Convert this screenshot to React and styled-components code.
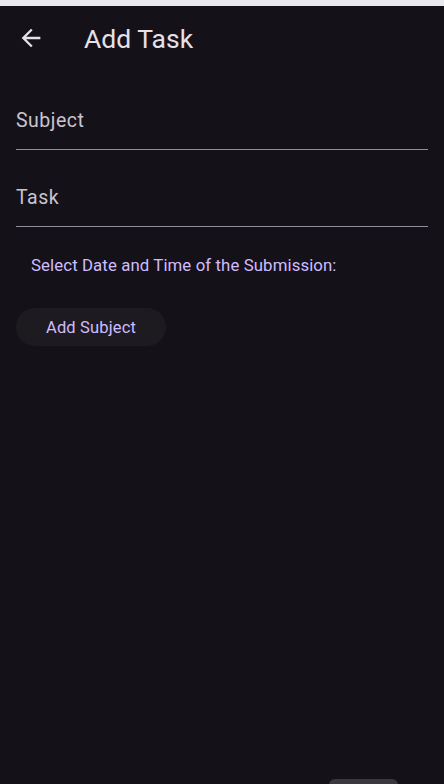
import React from 'react'
import styled, {createGlobalStyle} from 'styled-components'

const colors = {
  surface: '#141218',
  surfaceLow: '#1d1b20',
  onSurface: '#e6e0e9',
  onSurfaceVariant: '#cac4d0',
  outline: '#938f99',
  primary: '#d0bcff',
  strip: '#e8e9ef',
}

const GlobalStyle = createGlobalStyle`
  html, body {
    margin: 0;
    padding: 0;
    height: 100%;
    background: ${colors.surface};
    overflow: hidden;
  }
  #root {
    height: 100%;
  }
`

const Screen = styled.div`
  position: relative;
  height: 784px;
  display: flex;
  flex-direction: column;
  background: ${colors.surface};
  font-family: Roboto, 'Noto Sans', sans-serif;
  overflow: hidden;
`

const StatusStrip = styled.div`
  height: 6px;
  background: ${colors.strip};
`

const AppBar = styled.header`
  height: 64px;
  display: flex;
  align-items: center;
`

const BackButton = styled.button`
  width: 28px;
  height: 28px;
  margin-left: 17px;
  padding: 0;
  border: none;
  background: none;
  color: ${colors.onSurface};
  display: flex;
  cursor: pointer;
`

const Title = styled.h1`
  margin: 0 0 0 39px;
  font-size: 26.5px;
  font-weight: 400;
  color: ${colors.onSurface};
`

const Form = styled.div`
  display: flex;
  flex-direction: column;
  align-items: flex-start;
  padding: 3px 16px 0;
`

const Field = styled.div`
  align-self: stretch;
  padding: 36px 0 16px;
  border-bottom: 1px solid ${colors.outline};
  font-size: 19.5px;
  line-height: 24px;
  letter-spacing: 0.5px;
  color: ${colors.onSurfaceVariant};
`

const Hint = styled.p`
  margin: 28px 0 0 15px;
  font-size: 16.8px;
  line-height: 20px;
  letter-spacing: 0.1px;
  color: ${colors.primary};
`

const TonalButton = styled.button`
  margin-top: 33px;
  height: 38px;
  padding: 0 30px;
  border: none;
  border-radius: 19px;
  background: ${colors.surfaceLow};
  color: ${colors.primary};
  font-family: inherit;
  font-size: 16.5px;
  letter-spacing: 0.15px;
  cursor: pointer;
`

const BottomTab = styled.div`
  position: absolute;
  left: 329px;
  bottom: -10px;
  width: 69px;
  height: 15px;
  border-radius: 6px 6px 0 0;
  background: #3a383e;
`

const ArrowBack = () => (
  <svg width="28" height="28" viewBox="0 0 24 24" fill="currentColor">
    <path d="M20 11H7.83l5.59-5.59L12 4l-8 8 8 8 1.41-1.41L7.83 13H20v-2z" />
  </svg>
)

export default function App() {
  return (
    <Screen>
      <GlobalStyle />
      <StatusStrip />
      <AppBar>
        <BackButton aria-label="Back"><ArrowBack /></BackButton>
        <Title>Add Task</Title>
      </AppBar>
      <Form>
        <Field>Subject</Field>
        <Field>Task</Field>
        <Hint>Select Date and Time of the Submission:</Hint>
        <TonalButton>Add Subject</TonalButton>
      </Form>
      <BottomTab />
    </Screen>
  )
}
